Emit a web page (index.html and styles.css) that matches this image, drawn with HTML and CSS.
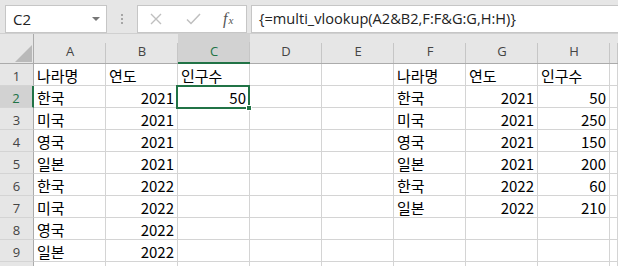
FILE: index.html
```html
<!DOCTYPE html>
<html lang="ko">
<head>
<meta charset="utf-8">
<link rel="stylesheet" href="styles.css">
</head>
<body>
<div class="app">
  <div class="toolbar">
    <div class="namebox"><span class="name">C2</span><span class="caret"></span></div>
    <div class="grip"><i></i><i></i><i></i></div>
    <div class="btns">
      <svg class="ico-x" width="12" height="12" viewBox="0 0 12 12"><path d="M1 1L11 11M11 1L1 11" stroke="#bfbfbf" stroke-width="1.4" fill="none"/></svg>
      <svg class="ico-ok" width="15" height="12" viewBox="0 0 15 12"><path d="M1 6.5L5 10.5L14 1" stroke="#bfbfbf" stroke-width="1.5" fill="none"/></svg>
      <span class="fx">f<sub>x</sub></span>
    </div>
    <div class="formula">{=multi_vlookup(A2&amp;B2,F:F&amp;G:G,H:H)}</div>
  </div>
  <div class="sheet">
    <div class="corner"><span class="tri"></span></div>
    <div class="ch">A</div><div class="ch">B</div><div class="ch sel">C</div><div class="ch">D</div><div class="ch">E</div><div class="ch">F</div><div class="ch">G</div><div class="ch">H</div><div class="ch"></div>

    <div class="rh">1</div><div class="c">나라명</div><div class="c">연도</div><div class="c">인구수</div><div class="c"></div><div class="c"></div><div class="c">나라명</div><div class="c">연도</div><div class="c">인구수</div><div class="c"></div>
    <div class="rh sel">2</div><div class="c">한국</div><div class="c n">2021</div><div class="c n active">50<span class="selbox"><span class="handle"></span></span></div><div class="c"></div><div class="c"></div><div class="c">한국</div><div class="c n">2021</div><div class="c n">50</div><div class="c"></div>
    <div class="rh">3</div><div class="c">미국</div><div class="c n">2021</div><div class="c"></div><div class="c"></div><div class="c"></div><div class="c">미국</div><div class="c n">2021</div><div class="c n">250</div><div class="c"></div>
    <div class="rh">4</div><div class="c">영국</div><div class="c n">2021</div><div class="c"></div><div class="c"></div><div class="c"></div><div class="c">영국</div><div class="c n">2021</div><div class="c n">150</div><div class="c"></div>
    <div class="rh">5</div><div class="c">일본</div><div class="c n">2021</div><div class="c"></div><div class="c"></div><div class="c"></div><div class="c">일본</div><div class="c n">2021</div><div class="c n">200</div><div class="c"></div>
    <div class="rh">6</div><div class="c">한국</div><div class="c n">2022</div><div class="c"></div><div class="c"></div><div class="c"></div><div class="c">한국</div><div class="c n">2022</div><div class="c n">60</div><div class="c"></div>
    <div class="rh">7</div><div class="c">미국</div><div class="c n">2022</div><div class="c"></div><div class="c"></div><div class="c"></div><div class="c">일본</div><div class="c n">2022</div><div class="c n">210</div><div class="c"></div>
    <div class="rh">8</div><div class="c">영국</div><div class="c n">2022</div><div class="c"></div><div class="c"></div><div class="c"></div><div class="c"></div><div class="c"></div><div class="c"></div><div class="c"></div>
    <div class="rh">9</div><div class="c">일본</div><div class="c n">2022</div><div class="c"></div><div class="c"></div><div class="c"></div><div class="c"></div><div class="c"></div><div class="c"></div><div class="c"></div>
    <div class="rh"></div><div class="c"></div><div class="c"></div><div class="c"></div><div class="c"></div><div class="c"></div><div class="c"></div><div class="c"></div><div class="c"></div><div class="c"></div>
  </div>
</div>
</body>
</html>
```
FILE: styles.css
```css
* { box-sizing: border-box; }
html, body { margin: 0; padding: 0; }
body {
  width: 618px; height: 266px; overflow: hidden;
  background: #fff;
  font-family: "Noto Sans CJK KR", "Noto Sans", sans-serif;
}
.app { width: 618px; }

.toolbar {
  height: 34px;
  background: #e6e6e6;
  border-bottom: 1px solid #d0d0d0;
  display: flex;
  align-items: flex-start;
  padding: 5px 0 0 5px;
}
.namebox {
  width: 102px; height: 28px;
  background: #fff;
  border: 1px solid #c6c6c6;
  display: flex; align-items: center; justify-content: space-between;
  padding: 0 6px 0 7px;
}
.name { font-family: "Open Sans", "Noto Sans", sans-serif; font-size: 15px; color: #222; }
.caret {
  width: 0; height: 0;
  border-left: 4px solid transparent; border-right: 4px solid transparent;
  border-top: 4px solid #777;
}
.grip {
  width: 30px; height: 28px;
  display: flex; flex-direction: column; align-items: center; justify-content: center; gap: 2px;
}
.grip i { display: block; width: 2px; height: 2px; background: #a6a6a6; }
.btns {
  width: 110px; height: 28px;
  background: #fff;
  border: 1px solid #c6c6c6;
  display: flex; align-items: center;
  padding-left: 12px;
}
.ico-x { margin-right: 24px; }
.ico-ok { margin-right: 22px; }
.fx {
  font-family: "Liberation Serif", serif; font-style: italic;
  font-size: 16px; color: #555; line-height: 1;
}
.fx sub { font-size: 11px; vertical-align: 0; margin-left: 1px; }
.formula {
  margin-left: 4px;
  flex: 1; height: 28px;
  background: #fff;
  border: 1px solid #c6c6c6; border-right: none;
  padding-left: 7px;
  font-family: "Open Sans", "Noto Sans", sans-serif; font-size: 14.6px; color: #222;
  line-height: 25px; white-space: nowrap;
}

.sheet {
  display: grid;
  grid-template-columns: 34px repeat(8, 72px) 1fr;
  grid-template-rows: 30px;
  grid-auto-rows: 22px;
}
.corner {
  background: #e6e6e6;
  border-right: 1px solid #ababab; border-bottom: 1px solid #ababab;
  display: flex; align-items: flex-end; justify-content: flex-end;
  padding: 0 1px 1px 0;
}
.tri {
  width: 0; height: 0;
  border-left: 17px solid transparent;
  border-bottom: 17px solid #b9b9b9;
}
.ch {
  background: linear-gradient(#c6c6c6, #c6c6c6) right bottom / 1px 20px no-repeat, #e6e6e6;
  border-bottom: 1px solid #ababab;
  display: flex; align-items: center; justify-content: center;
  padding-top: 5px;
  font-family: "Open Sans", "Noto Sans", sans-serif; font-size: 13px; color: #444;
}
.ch.sel {
  background: linear-gradient(#c6c6c6, #c6c6c6) right bottom / 1px 20px no-repeat, #d2d2d2;
  border-bottom: 2px solid #217346;
  color: #217346;
  padding-top: 6px;
}
.rh {
  background: #e6e6e6;
  border-right: 1px solid #ababab; border-bottom: 1px solid #d4d4d4;
  display: flex; align-items: center; justify-content: center;
  font-family: "Open Sans", "Noto Sans", sans-serif; font-size: 13px; color: #444;
  padding-top: 2px;
}
.rh.sel { background: #d2d2d2; border-right: 2px solid #217346; color: #217346; }
.c {
  border-right: 1px solid #d4d4d4; border-bottom: 1px solid #d4d4d4;
  display: flex; align-items: flex-end;
  padding: 0 3px 1px 3px;
  font-size: 15px; line-height: 16px; color: #000;
  white-space: nowrap;
}
.c.n { justify-content: flex-end; }
.c.active { position: relative; }
.selbox {
  position: absolute; left: -2px; top: -1px; width: 74px; height: 24px;
  border: 2px solid #217346;
}
.handle {
  position: absolute; right: -4px; bottom: -4px; width: 6px; height: 6px;
  background: #217346; border: 1px solid #fff;
}
```
